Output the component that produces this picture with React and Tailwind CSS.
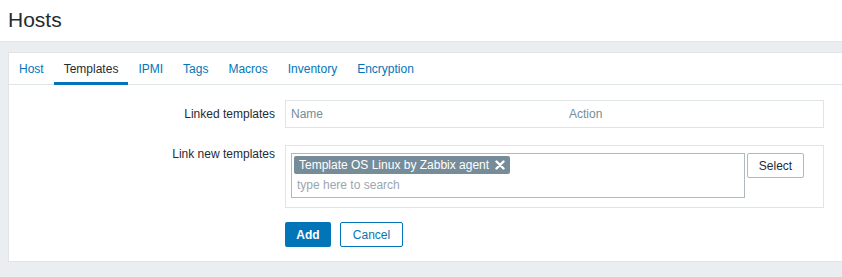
import React from "react";

export default function App() {
  const tabs = ["Host", "Templates", "IPMI", "Tags", "Macros", "Inventory", "Encryption"];
  return (
    <div className="w-[842px] h-[277px] overflow-hidden bg-[#ebeef0] font-['Liberation_Sans',Arial,sans-serif] text-[12px] text-[#1f2c33]">
      <header className="h-[42px] bg-white border-b border-[#dfe4e7] pl-2 flex items-center">
        <h1 className="text-[21px] leading-[24px] text-[#1f2c33] -mt-[2px]">Hosts</h1>
      </header>
      <div className="pl-2 pt-[10px]">
        <div className="bg-white border-t border-l border-b border-[#dfe4e7]">
          <div className="flex h-[32px] border-b border-[#dfe4e7]">
            {tabs.map((t) => (
              <div
                key={t}
                className={
                  "relative px-[10px] flex items-center leading-[14px] " +
                  (t === "Templates" ? "text-[#1f2c33]" : "text-[#0275b8]")
                }
              >
                {t}
                {t === "Templates" && (
                  <span className="absolute left-0 right-0 bottom-[-1px] h-[3px] bg-[#0275b8]" />
                )}
              </div>
            ))}
          </div>
          <div className="pt-[15px] pb-[14px]">
            <div className="flex items-center gap-[10px]">
              <div className="w-[266px] text-right leading-[14px]">Linked templates</div>
              <div className="w-[539px] h-[28px] border border-[#dfe4e7] flex items-center text-[#768d99] leading-[14px]">
                <div className="w-[283px] pl-[5px]">Name</div>
                <div>Action</div>
              </div>
            </div>
            <div className="flex items-start gap-[10px] mt-[17px]">
              <div className="w-[266px] text-right leading-[14px] pt-[2px]">Link new templates</div>
              <div className="w-[539px] h-[63px] border border-[#dfe4e7] pt-[7px] pl-[5px] flex items-start gap-[2px]">
                <div className="w-[454px] h-[45px] border border-[#acbbc2] pl-[2px] pt-[2px]">
                  <div className="inline-flex items-center h-[18px] bg-[#768d99] text-white px-[5px] gap-[6px] rounded-[2px] leading-[14px]">
                    <span>Template OS Linux by Zabbix agent</span>
                    <svg width="10" height="10" viewBox="0 0 10 10">
                      <path d="M1.5 1.5 L8.5 8.5 M8.5 1.5 L1.5 8.5" stroke="white" strokeWidth="2.4" strokeLinecap="round" />
                    </svg>
                  </div>
                  <div className="pl-[3px] mt-[4px] leading-[14px] text-[#9ba7ad]">type here to search</div>
                </div>
                <button className="w-[57px] h-[25px] border border-[#acbbc2] rounded-[2px] bg-white text-[#1f2c33] text-[12px] leading-[14px]">
                  Select
                </button>
              </div>
            </div>
            <div className="flex gap-[9px] mt-[14px] ml-[276px]">
              <button className="w-[46px] h-[25px] bg-[#0275b8] text-white rounded-[2px] text-[12px] leading-[14px] font-bold">
                Add
              </button>
              <button className="w-[63px] h-[25px] bg-white border border-[#0275b8] text-[#0275b8] rounded-[2px] text-[12px] leading-[14px]">
                Cancel
              </button>
            </div>
          </div>
        </div>
      </div>
    </div>
  );
}
